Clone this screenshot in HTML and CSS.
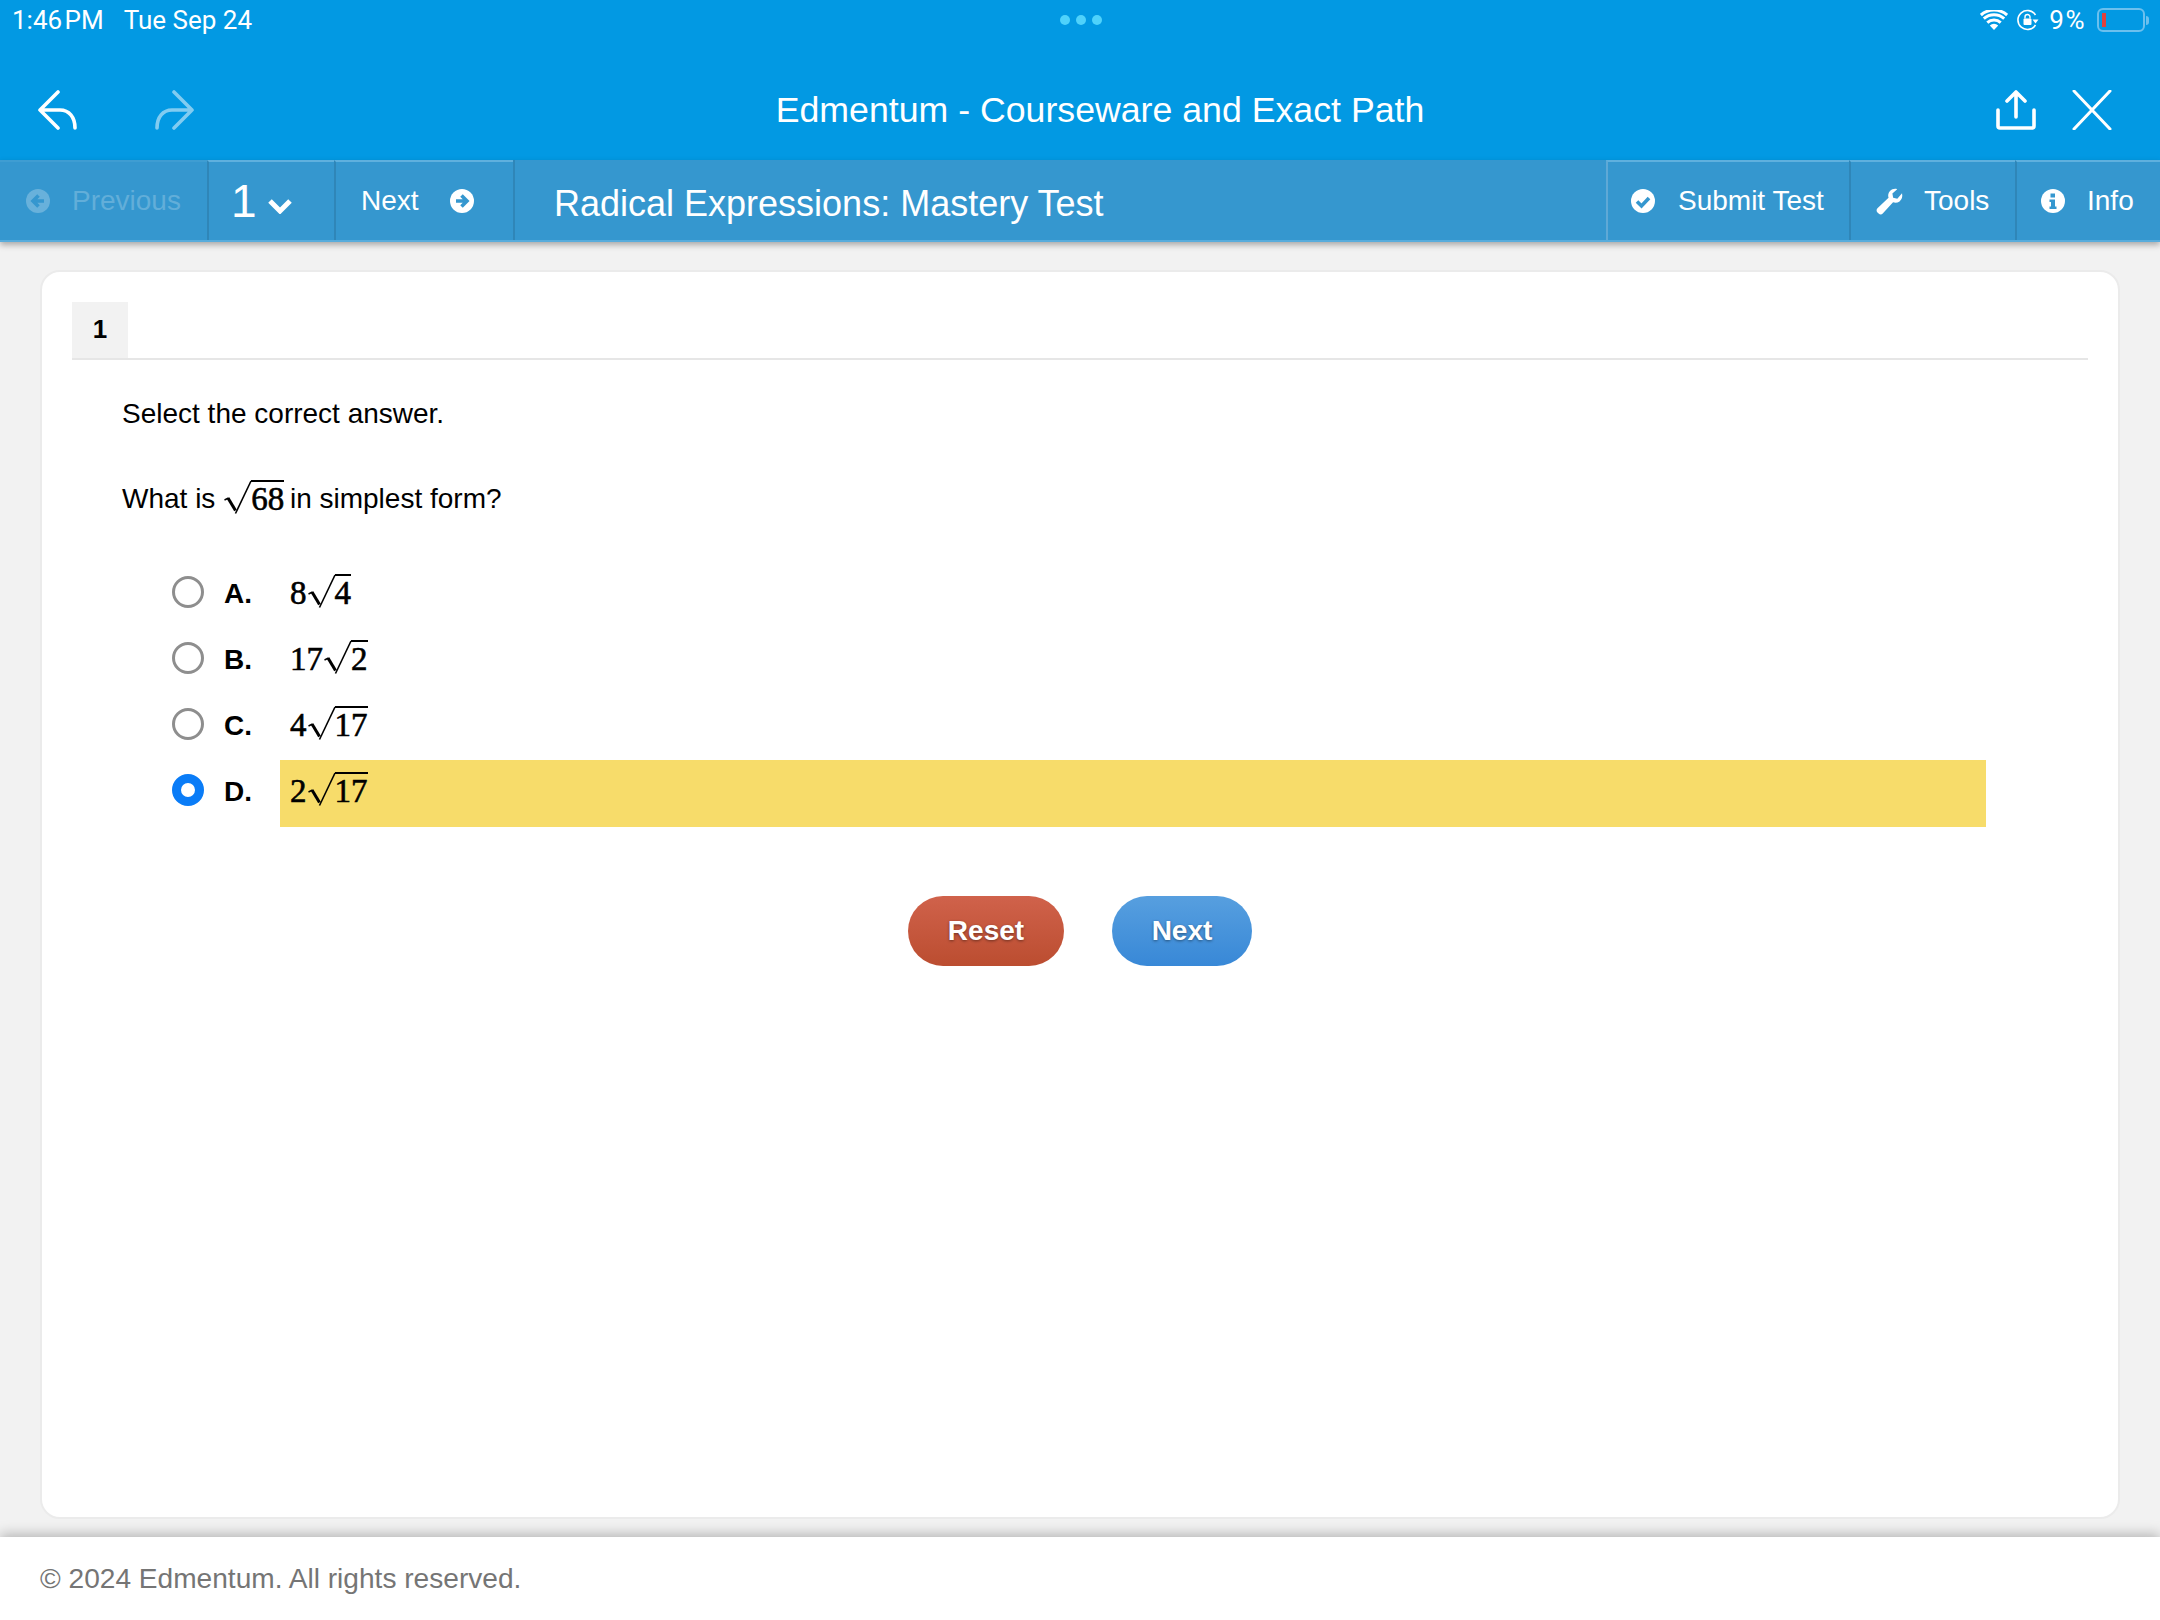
FILE: index.html
```html
<!DOCTYPE html>
<html lang="en">
<head>
    <meta charset="UTF-8">
    <meta name="viewport" content="width=device-width, initial-scale=1.0">
    <title>Edmentum - Courseware and Exact Path</title>
    <link rel="stylesheet" href="styles.css">
</head>
<body>
    <header class="app-header">
        <div class="status-bar">
            <div class="status-left"><span class="status-time">1:46 PM</span><span>Tue Sep 24</span></div>
            <div class="status-dots"><i></i><i></i><i></i></div>
            <div class="status-right">
                <svg class="icon-wifi" viewBox="0 0 28 20"><path d="M14 20l-4.200-4.600a6 6 0 0 1 8.400 0z" fill="#fff"/><path d="M7.300 12.600a10 10 0 0 1 13.400 0M3.800 8.600a15.400 15.400 0 0 1 20.400 0M.9 5a20 20 0 0 1 26.200 0" fill="none" stroke="#fff" stroke-width="3"/></svg>
                <svg class="icon-lock" viewBox="0 0 22 24"><path d="M18.500 17a9.500 9.500 0 1 1 0-10" fill="none" stroke="#fff" stroke-width="1.600"/><path d="M15.500 11.500h6l-3 4z" fill="#fff"/><rect x="6.500" y="10.500" width="8" height="6.500" rx="1" fill="#fff"/><path d="M8 10.500V9a2.500 2.500 0 0 1 5 0v1.500" fill="none" stroke="#fff" stroke-width="1.400"/></svg>
                <span class="battery-pct">9%</span>
                <div class="battery"><div class="battery-level"></div></div>
                <div class="battery-nub"></div>
            </div>
        </div>
        <div class="title-bar">
            <div class="title-icons">
                <svg class="nav-icon" viewBox="0 0 40 40"><path d="M20 2L2 20l18 18M2 20h20c9 0 15 7 15 18" fill="none" stroke="#fff" stroke-width="3.600" stroke-linecap="round" stroke-linejoin="round"/></svg>
                <svg class="nav-icon faded" viewBox="0 0 40 40"><path d="M20 2l18 18-18 18M38 20H18C9 20 3 27 3 38" fill="none" stroke="#fff" stroke-width="3.600" stroke-linecap="round" stroke-linejoin="round"/></svg>
            </div>
            <h1 class="app-title">Edmentum - Courseware and Exact Path</h1>
            <div class="title-icons right">
                <svg class="nav-icon" viewBox="0 0 40 40"><path d="M20 27V2M11 11l9-9 9 9M2 20v16a2 2 0 0 0 2 2h32a2 2 0 0 0 2-2V20" fill="none" stroke="#fff" stroke-width="3.600" stroke-linecap="round" stroke-linejoin="round"/></svg>
                <svg class="nav-icon" viewBox="0 0 40 40"><path d="M2 1l36 38M38 1L2 39" fill="none" stroke="#fff" stroke-width="3" stroke-linecap="round"/></svg>
            </div>
        </div>
    </header>

    <nav class="toolbar">
        <div class="tool-cell prev disabled">
            <svg class="tool-icon" viewBox="0 0 24 24"><circle cx="12" cy="12" r="12" fill="#fff"/><path d="M18 12H8M12.500 6.500L7 12l5.500 5.500" fill="none" stroke="#3597cf" stroke-width="3.600"/></svg>
            <span>Previous</span>
        </div>
        <div class="tool-cell page-select">
            <span class="page-num">1</span>
            <svg class="chevron" viewBox="0 0 26 16"><path d="M3 3l10 10L23 3" fill="none" stroke="#fff" stroke-width="5"/></svg>
        </div>
        <div class="tool-cell next">
            <span>Next</span>
            <svg class="tool-icon" viewBox="0 0 24 24"><circle cx="12" cy="12" r="12" fill="#fff"/><path d="M6 12h10M11.500 6.500L17 12l-5.500 5.500" fill="none" stroke="#3597cf" stroke-width="3.600"/></svg>
        </div>
        <div class="test-title">Radical Expressions: Mastery Test</div>
        <div class="tool-cell submit">
            <svg class="tool-icon" viewBox="0 0 24 24"><circle cx="12" cy="12" r="12" fill="#fff"/><path d="M6 12.500l4.500 4.500L18 9" fill="none" stroke="#3597cf" stroke-width="3.600"/></svg>
            <span>Submit Test</span>
        </div>
        <div class="tool-cell tools">
            <svg class="tool-icon wrench" viewBox="0 0 28 28"><path d="M27 5.500c.8 3.500-.2 6.500-2.600 8.400-2 1.500-4.400 1.800-6.700 1L7 26.500c-1.200 1.200-3 1.200-4.300 0l-1.200-1.200c-1.200-1.200-1.200-3 0-4.300L13 10c-.8-2.400-.3-5 1.500-6.900C16.500 1.100 19.400.4 22 1.200l-5 4.600.8 4.400 4.300.9z" fill="#fff"/></svg>
            <span>Tools</span>
        </div>
        <div class="tool-cell info">
            <svg class="tool-icon" viewBox="0 0 24 24"><circle cx="12" cy="12" r="12" fill="#fff"/><path d="M9.500 4.500h4.500v4h-4.500zM8.500 10.500h5.500v7h1.500v2.500h-7v-2.500h1.500v-4.500h-1.500z" fill="#3597cf"/></svg>
            <span>Info</span>
        </div>
    </nav>

    <main class="content">
        <section class="question-card">
            <div class="tab-strip"><div class="tab">1</div></div>
            <p class="prompt">Select the correct answer.</p>
            <p class="question">What is
                <span class="math"><span class="root"><svg class="radical" viewBox="0 0 29 34"><path d="M1.500 20l4-2" fill="none" stroke="#000" stroke-width="1.400"/><path d="M5 18l7.500 12.500" fill="none" stroke="#000" stroke-width="3"/><path d="M12.500 33.500L28 1" fill="none" stroke="#000" stroke-width="1.600"/></svg><span class="radicand">68</span></span></span>
                in simplest form?</p>
            <div class="choices">
                <div class="choice">
                    <span class="radio"></span>
                    <span class="letter">A.</span>
                    <div class="answer"><span class="math">8<span class="root"><svg class="radical" viewBox="0 0 29 34"><path d="M1.500 20l4-2" fill="none" stroke="#000" stroke-width="1.400"/><path d="M5 18l7.500 12.500" fill="none" stroke="#000" stroke-width="3"/><path d="M12.500 33.500L28 1" fill="none" stroke="#000" stroke-width="1.600"/></svg><span class="radicand">4</span></span></span></div>
                </div>
                <div class="choice">
                    <span class="radio"></span>
                    <span class="letter">B.</span>
                    <div class="answer"><span class="math">17<span class="root"><svg class="radical" viewBox="0 0 29 34"><path d="M1.500 20l4-2" fill="none" stroke="#000" stroke-width="1.400"/><path d="M5 18l7.500 12.500" fill="none" stroke="#000" stroke-width="3"/><path d="M12.500 33.500L28 1" fill="none" stroke="#000" stroke-width="1.600"/></svg><span class="radicand">2</span></span></span></div>
                </div>
                <div class="choice">
                    <span class="radio"></span>
                    <span class="letter">C.</span>
                    <div class="answer"><span class="math">4<span class="root"><svg class="radical" viewBox="0 0 29 34"><path d="M1.500 20l4-2" fill="none" stroke="#000" stroke-width="1.400"/><path d="M5 18l7.500 12.500" fill="none" stroke="#000" stroke-width="3"/><path d="M12.500 33.500L28 1" fill="none" stroke="#000" stroke-width="1.600"/></svg><span class="radicand">17</span></span></span></div>
                </div>
                <div class="choice selected">
                    <span class="radio"></span>
                    <span class="letter">D.</span>
                    <div class="answer"><span class="math">2<span class="root"><svg class="radical" viewBox="0 0 29 34"><path d="M1.500 20l4-2" fill="none" stroke="#000" stroke-width="1.400"/><path d="M5 18l7.500 12.500" fill="none" stroke="#000" stroke-width="3"/><path d="M12.500 33.500L28 1" fill="none" stroke="#000" stroke-width="1.600"/></svg><span class="radicand">17</span></span></span></div>
                </div>
            </div>
            <div class="actions">
                <button class="btn btn-reset">Reset</button>
                <button class="btn btn-next">Next</button>
            </div>
        </section>
    </main>

    <footer class="footer">© 2024 Edmentum. All rights reserved.</footer>
</body>
</html>
```

FILE: styles.css
```css
html, body {
    height: 100%;
}

body {
    margin: 0;
    height: 100vh;
    display: flex;
    flex-direction: column;
    overflow: hidden;
    background: #f2f2f2;
    font-family: "Liberation Sans", Arial, sans-serif;
    color: #000;
}

.app-header {
    background: #0299e3;
    color: #fff;
    height: 160px;
    flex: none;
}

.status-bar {
    height: 40px;
    display: grid;
    grid-template-columns: 1fr auto 1fr;
    align-items: center;
    padding: 0 11px 0 12px;
    font-family: Roboto, sans-serif;
    font-size: 26px;
}

.status-left {
    display: flex;
    gap: 20px;
}

.status-time {
    word-spacing: -4px;
}

.status-dots {
    display: flex;
    gap: 6px;
}

.status-dots i {
    width: 10px;
    height: 10px;
    border-radius: 50%;
    background: #4fd2fb;
}

.status-right {
    display: flex;
    align-items: center;
    justify-content: flex-end;
}

.icon-wifi {
    width: 28px;
    height: 20px;
}

.icon-lock {
    width: 22px;
    height: 24px;
    margin-left: 9px;
}

.battery-pct {
    margin-left: 10px;
    letter-spacing: 1.5px;
}

.battery {
    width: 48px;
    height: 24px;
    margin-left: 11px;
    padding: 3px;
    box-sizing: border-box;
    border: 2px solid #6cc0ee;
    border-radius: 6px;
}

.battery-level {
    width: 4px;
    height: 100%;
    background: #e0403c;
}

.battery-nub {
    width: 3px;
    height: 9px;
    margin-left: 1px;
    background: #6cc0ee;
    border-radius: 0 3px 3px 0;
}

.title-bar {
    height: 120px;
    display: flex;
    align-items: center;
    padding: 20px 48px 0 38px;
    box-sizing: border-box;
}

.title-icons {
    display: flex;
    gap: 76px;
}

.title-icons.right {
    gap: 36px;
}

.nav-icon {
    width: 40px;
    height: 40px;
}

.faded {
    opacity: 0.5;
}

.app-title {
    flex: 1;
    margin: 0;
    padding-left: 10px;
    text-align: center;
    font-size: 35.7px;
    font-weight: 400;
}

.toolbar {
    height: 82px;
    flex: none;
    display: flex;
    align-items: stretch;
    box-sizing: border-box;
    background: #3597cf;
    color: #fff;
    font-size: 28px;
    border-bottom: 2px solid #57acdc;
    box-shadow: 0 3px 6px rgba(0, 0, 0, 0.3);
    position: relative;
}

.tool-cell {
    display: flex;
    align-items: center;
    box-sizing: border-box;
    border-top: 2px solid #5fb0de;
    border-left: 2px solid #2f86b8;
}

.tool-icon {
    width: 24px;
    height: 24px;
    flex: none;
}

.prev {
    width: 207px;
    padding-left: 26px;
    gap: 22px;
    border: 0;
    border-top: 2px solid #3f9dd2;
}

.disabled {
    color: #62aed9;
}

.disabled .tool-icon {
    opacity: 0.25;
}

.page-select {
    width: 127px;
    padding-left: 22px;
    gap: 10px;
}

.page-num {
    font-size: 46px;
}

.chevron {
    width: 26px;
    height: 16px;
    margin-top: 10px;
}

.next {
    width: 179px;
    padding-left: 25px;
    gap: 31px;
}

.test-title {
    flex: 1;
    display: flex;
    align-items: center;
    padding: 8px 0 0 39px;
    font-size: 36px;
    border-left: 2px solid #2f86b8;
}

.submit {
    width: 243px;
    padding-left: 23px;
    gap: 23px;
    border-left: 2px solid #5fa9d6;
}

.tools {
    width: 166px;
    padding-left: 25px;
    gap: 21px;
}

.wrench {
    width: 27px;
    height: 27px;
}

.info {
    width: 145px;
    padding-left: 24px;
    gap: 22px;
}

.content {
    flex: 1;
    min-height: 0;
    padding: 28px 40px 18px 40px;
    display: flex;
}

.question-card {
    flex: 1;
    box-sizing: border-box;
    background: #fff;
    border: 2px solid #ebebeb;
    border-radius: 20px;
    padding: 30px 30px 0;
}

.tab-strip {
    border-bottom: 2px solid #e6e6e6;
}

.tab {
    width: 56px;
    height: 56px;
    background: #f2f2f2;
    text-align: center;
    line-height: 54px;
    font-size: 26px;
    font-weight: 700;
}

.prompt, .question {
    margin: 0;
    padding-left: 50px;
    font-size: 28px;
}

.prompt {
    margin-top: 36px;
    line-height: 36px;
}

.question {
    margin-top: 45px;
    line-height: 44px;
}

.math {
    display: inline-flex;
    align-items: flex-end;
    font-family: "Liberation Serif", "Times New Roman", serif;
    font-size: 33px;
    line-height: 34px;
    -webkit-text-stroke: 0.6px #000;
    vertical-align: -6px;
}

.question .math {
    margin-right: -2px;
}

.root {
    display: inline-flex;
    align-items: flex-start;
}

.radical {
    width: 29px;
    height: 34px;
    flex: none;
}

.radicand {
    border-top: 2px solid #000;
    margin-left: -1px;
}

.choices {
    margin-top: 41px;
    padding-left: 100px;
    padding-right: 102px;
}

.choice {
    height: 66px;
    display: flex;
    align-items: flex-start;
}

.choice.selected {
    height: 67px;
}

.radio {
    width: 32px;
    height: 32px;
    flex: none;
    box-sizing: border-box;
    margin-top: 14px;
    border: 3px solid #8e8e8e;
    border-radius: 50%;
    background: #fff;
}

.selected .radio {
    border: 9px solid #0a7cf7;
}

.letter {
    width: 56px;
    margin-left: 20px;
    font-size: 28px;
    font-weight: 700;
    line-height: 64px;
}

.answer {
    flex: 1;
    align-self: stretch;
    padding: 12px 0 0 10px;
    box-sizing: border-box;
}

.selected .answer {
    background: #f7dc6a;
}

.actions {
    display: flex;
    justify-content: center;
    gap: 48px;
    margin-top: 69px;
}

.btn {
    height: 70px;
    padding: 0;
    border: 0;
    border-radius: 35px;
    color: #fff;
    font-family: inherit;
    font-size: 28px;
    font-weight: 700;
    text-shadow: 0 1px 3px rgba(0, 0, 0, 0.45);
}

.btn-reset {
    width: 156px;
    background: linear-gradient(#d0624b, #bb4d30);
}

.btn-next {
    width: 140px;
    background: linear-gradient(#579fdf, #3888d7);
}

.footer {
    height: 83px;
    flex: none;
    box-sizing: border-box;
    background: #fff;
    padding: 0 40px;
    line-height: 83px;
    font-size: 28.1px;
    color: #757575;
    box-shadow: 0 -3px 12px rgba(0, 0, 0, 0.25);
    position: relative;
}
```
